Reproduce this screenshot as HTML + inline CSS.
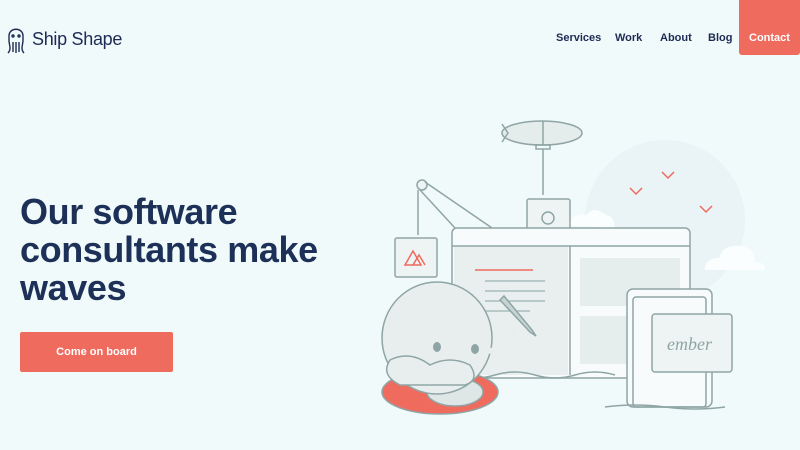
<!DOCTYPE html>
<html><head><meta charset="utf-8"><style>
*{margin:0;padding:0;box-sizing:border-box}
body{width:800px;height:450px;overflow:hidden;background:#f1fafa;font-family:"Liberation Sans",sans-serif;position:relative;color:#1d2b55}
.logo{position:absolute;left:6px;top:24px;display:flex;align-items:center}
.logo span{font-size:18px;margin-left:6px;color:#1d2b55;letter-spacing:-0.3px}
.nav{position:absolute;top:0;right:0;height:55px}
.nav a{position:absolute;top:32px;font-size:11px;font-weight:bold;color:#1d2b55;text-decoration:none;white-space:nowrap}
.nav .c{background:#ef6b5e;color:#fff;height:55px;width:61px;top:0;right:0;padding-top:32px;text-align:center;border-radius:0 0 3px 3px}
h1{position:absolute;left:20px;top:193px;font-size:36px;line-height:38px;font-weight:bold;letter-spacing:-0.4px;color:#1d3058}
.btn{position:absolute;left:20px;top:332px;width:153px;height:40px;background:#ef6b5e;border-radius:2px;color:#fff;font-size:11px;font-weight:bold;display:flex;align-items:center;justify-content:center}
svg.il{position:absolute;left:0;top:0}
</style></head><body>
<div class="logo"><svg width="20" height="30" viewBox="0 0 20 30" fill="none" stroke="#1d2b55" stroke-width="1.4"><path d="M3 12 C3 3 17 3 17 12 L17 16 C17 20 16 21 16 24 C16 27 17 28 18 29 M3 12 L3 16 C3 20 4 21 4 24 C4 27 3 28 2 29 M7 18 L7 28 M10 18 L10 29 M13 18 L13 28"/><circle cx="7" cy="12" r="1"/><circle cx="13" cy="12" r="1"/></svg><span>Ship Shape</span></div>
<div class="nav" style="width:260px"><a style="left:16px">Services</a><a style="left:75px">Work</a><a style="left:120px">About</a><a style="left:168px">Blog</a><a class="c">Contact</a></div>
<h1>Our software<br>consultants make<br>waves</h1>
<div class="btn">Come on board</div>
<svg class="il" width="800" height="450" viewBox="0 0 800 450" fill="none" stroke="#8fa5a5" stroke-width="1.5">
<circle cx="665" cy="220" r="80" fill="#eaf3f5" stroke="none"/>
<path d="M705 270 q0-12 14-12 q4-14 22-12 q14 2 14 16 q10 0 10 8 z" fill="#fbfefe" stroke="none"/>
<path d="M570 225 q2-12 16-10 q8-10 20 0 q10 2 8 14 z" fill="#fbfefe" stroke="none"/>
<path d="M630 188 l6 6 6-6 M662 172 l6 6 6-6 M700 206 l6 6 6-6" stroke="#ef6b5e"/>
<ellipse cx="542" cy="133" rx="40" ry="12" fill="#e4ecec"/><path d="M502 124 l6 9 -6 9 M543 121 v24 M536 145 h14 v4 h-14z M543 149 V195"/>
<rect x="527" y="199" width="43" height="38" rx="2" fill="#eef4f4"/><circle cx="548" cy="218" r="6"/>
<circle cx="422" cy="185" r="5" fill="#eef4f4"/><path d="M425 182 L492 228 M420 190 L455 228 M418 190 V235"/>
<rect x="395" y="238" width="42" height="39" rx="2" fill="#eef4f4"/><path d="M405 265 l8-14 8 14 z M413 265 l6-10 6 10" stroke="#ef6b5e"/>
<rect x="452" y="228" width="238" height="150" rx="5" fill="#f7fbfb"/><path d="M452 246 H690 M570 246 V375"/>
<rect x="454" y="247" width="114" height="128" fill="#e9efef" stroke="none"/>
<rect x="580" y="258" width="100" height="48" fill="#e6eded" stroke="none"/><rect x="580" y="316" width="100" height="48" fill="#e6eded" stroke="none"/>
<path d="M475 270 H533" stroke="#ef6b5e"/><path d="M485 281 H545 M485 291 H545 M485 301 H545 M485 311 H530" stroke="#a9bcbc"/>
<path d="M455 375 q20 6 40 0 t40 0 t40 0 t40 0"/>
<rect x="627" y="289" width="85" height="118" rx="6" fill="#f7fbfb"/><rect x="633" y="297" width="73" height="110" rx="3"/>
<rect x="652" y="314" width="80" height="58" rx="3" fill="#eef4f4"/>
<text x="667" y="350" font-family="Liberation Serif,serif" font-style="italic" font-size="18" fill="#8fa5a5" stroke="none">ember</text>
<path d="M605 407 q30 -4 60 0 t60 0"/>
<ellipse cx="440" cy="392" rx="58" ry="22" fill="#ef6b5e" stroke="#8fa5a5"/><ellipse cx="455" cy="392" rx="28" ry="14" fill="#dfe6e6"/>
<ellipse cx="437" cy="338" rx="55" ry="56" fill="#e8eeee"/>
<path d="M400 385 q-20 -10 -10 -25 q20 -10 40 5 q20 -10 40 0 q10 15 -5 20 z" fill="#e8eeee"/>
<path d="M485 350 q20 5 30 -20" stroke-width="6" stroke="#e8eeee"/>
<ellipse cx="437" cy="347" rx="4" ry="5" fill="#8fa5a5" stroke="none"/><ellipse cx="475" cy="349" rx="4" ry="5" fill="#8fa5a5" stroke="none"/>
<path d="M500 300 l30 32 6 4 -4-6 -28-34z" fill="#c8d3d3"/>
</svg>
</body></html>
